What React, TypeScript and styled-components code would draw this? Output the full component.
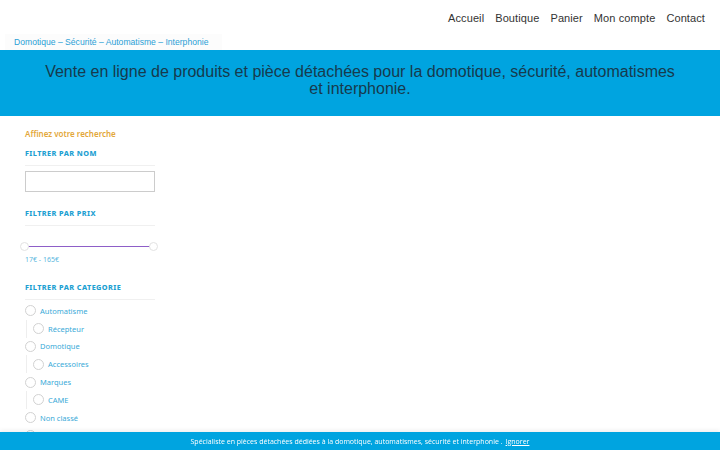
import styled, { createGlobalStyle } from "styled-components";

const GlobalStyle = createGlobalStyle`
  html, body {
    margin: 0;
    padding: 0;
    background: #ffffff;
  }
  body {
    font-family: "Liberation Sans", Arial, sans-serif;
  }
`;

const Header = styled.header`
  height: 50px;
  display: flex;
  flex-direction: column;
`;

const Nav = styled.nav`
  display: flex;
  justify-content: flex-end;
  gap: 11px;
  padding: 12px 15px 0 0;
  height: 22px;
`;

const NavLink = styled.a`
  font-family: "Liberation Sans", Arial, sans-serif;
  font-size: 11px;
  color: #333333;
  text-decoration: none;
  letter-spacing: 0.1px;
`;

const TaglineRow = styled.div`
  display: flex;
  padding: 0 0 0 5px;
`;

const Tagline = styled.div`
  background: #fcfcfc;
  padding: 3px 14px 3px 9px;
  font-size: 8.6px;
  color: #2a9fd6;
`;

const Banner = styled.section`
  background: #00a4e0;
  height: 66px;
  box-sizing: border-box;
  padding: 13px 30px 0;
  display: flex;
  justify-content: center;
`;

const BannerText = styled.h1`
  margin: 0;
  max-width: 640px;
  font-size: 16px;
  font-weight: normal;
  line-height: 17px;
  text-align: center;
  color: #173a4d;
`;

const Sidebar = styled.aside`
  width: 130px;
  margin: 0 0 0 25px;
  padding-top: 12px;
  font-family: "Noto Sans", "Open Sans", sans-serif;
`;

const Refine = styled.div`
  font-size: 8px;
  font-weight: 600;
  color: #e3a83b;
  line-height: 11px;
`;

const WidgetTitle = styled.h3<{ $top: number }>`
  margin: 0;
  padding: ${(p) => p.$top}px 0 7px;
  font-size: 7.3px;
  font-weight: 800;
  color: #1e9fd2;
  border-bottom: 1px solid #f0f0f0;
  line-height: 9px;
  letter-spacing: 0.4px;
`;

const SearchInput = styled.input`
  display: block;
  box-sizing: border-box;
  width: 130px;
  height: 21px;
  margin-top: 5px;
  border: 1px solid #cccccc;
  outline: none;
`;

const Slider = styled.div`
  position: relative;
  margin: 16px 0 0 -5px;
  width: 138px;
  height: 9px;
`;

const Track = styled.div`
  position: absolute;
  left: 5px;
  right: 5px;
  top: 4px;
  height: 1px;
  background: #8e5ec8;
`;

const Handle = styled.span<{ $side: "left" | "right" }>`
  position: absolute;
  top: 0;
  ${(p) => (p.$side === "left" ? "left: 0;" : "right: 0;")}
  width: 7px;
  height: 7px;
  border: 1px solid #e2e2e2;
  border-radius: 50%;
  background: #fff;
`;

const PriceLabel = styled.div`
  margin-top: 4px;
  font-size: 7px;
  color: #5bb8de;
`;

const CatList = styled.ul`
  list-style: none;
  margin: 2px 0 0;
  padding: 0;
`;

const CatItem = styled.li`
  margin: 0;
`;

const CatRow = styled.label`
  display: flex;
  align-items: center;
  gap: 4px;
  height: 17.8px;
  font-size: 7.5px;
  color: #3aaad8;
`;

const Box = styled.span`
  display: inline-block;
  width: 9px;
  height: 9px;
  border: 1px solid #d2d2d2;
  border-radius: 50%;
  background: #fff;
`;

const SubList = styled.ul`
  list-style: none;
  margin: 0 0 0 1px;
  padding: 0 0 0 6px;
  border-left: 1px solid #eeeeee;
`;

const CookieBar = styled.div`
  position: fixed;
  left: 0;
  right: 0;
  bottom: 0;
  height: 18px;
  background: #00a4e0;
  display: flex;
  align-items: center;
  justify-content: center;
  font-family: "Open Sans", "Noto Sans", sans-serif;
  font-size: 7px;
  color: #ffffff;
  box-shadow: 0 -2px 4px rgba(0, 0, 0, 0.06);
`;

const Dismiss = styled.a`
  color: #ffffff;
  text-decoration: underline;
  margin-left: 3px;
`;

const categories = [
  { name: "Automatisme", sub: ["Récepteur"] },
  { name: "Domotique", sub: ["Accessoires"] },
  { name: "Marques", sub: ["CAME"] },
  { name: "Non classé", sub: [] },
  { name: "Sécurité", sub: [] },
];

export default function App() {
  return (
    <>
      <GlobalStyle />
      <Header>
        <Nav>
          {["Accueil", "Boutique", "Panier", "Mon compte", "Contact"].map((n) => (
            <NavLink key={n} href="#">
              {n}
            </NavLink>
          ))}
        </Nav>
        <TaglineRow>
          <Tagline>Domotique – Sécurité – Automatisme – Interphonie</Tagline>
        </TaglineRow>
      </Header>
      <Banner>
        <BannerText>
          Vente en ligne de produits et pièce détachées pour la domotique, sécurité, automatismes et interphonie.
        </BannerText>
      </Banner>
      <Sidebar>
        <Refine>Affinez votre recherche</Refine>
        <WidgetTitle $top={10}>FILTRER PAR NOM</WidgetTitle>
        <SearchInput type="text" />
        <WidgetTitle $top={17}>FILTRER PAR PRIX</WidgetTitle>
        <Slider>
          <Track />
          <Handle $side="left" />
          <Handle $side="right" />
        </Slider>
        <PriceLabel>17€ - 165€</PriceLabel>
        <WidgetTitle $top={19}>FILTRER PAR CATEGORIE</WidgetTitle>
        <CatList>
          {categories.map((c) => (
            <CatItem key={c.name}>
              <CatRow>
                <Box />
                {c.name}
              </CatRow>
              {c.sub.length > 0 && (
                <SubList>
                  {c.sub.map((s) => (
                    <CatItem key={s}>
                      <CatRow>
                        <Box />
                        {s}
                      </CatRow>
                    </CatItem>
                  ))}
                </SubList>
              )}
            </CatItem>
          ))}
        </CatList>
      </Sidebar>
      <CookieBar>
        Spécialiste en pièces détachées dédiées à la domotique, automatismes, sécurité et interphonie .
        <Dismiss href="#">Ignorer</Dismiss>
      </CookieBar>
    </>
  );
}
